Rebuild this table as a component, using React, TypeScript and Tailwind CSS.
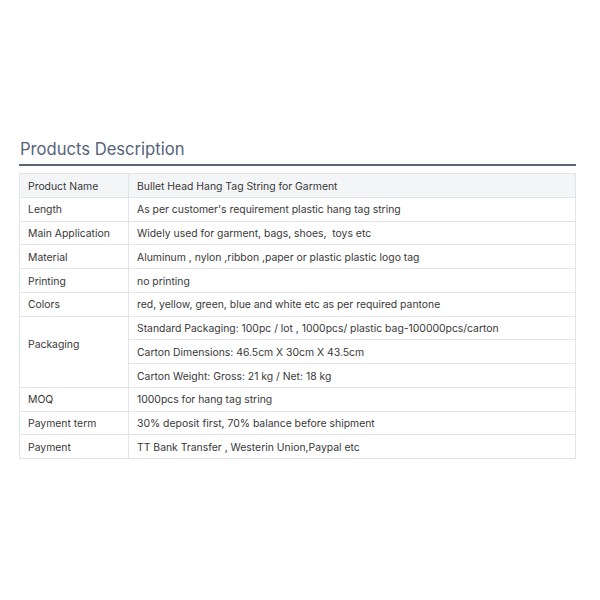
const rows: { label: string; values: string[] }[] = [
  { label: "Product Name", values: ["Bullet Head Hang Tag String for Garment"] },
  { label: "Length", values: ["As per customer's requirement plastic hang tag string"] },
  { label: "Main Application", values: ["Widely used for garment, bags, shoes,  toys etc"] },
  { label: "Material", values: ["Aluminum , nylon ,ribbon ,paper or plastic plastic logo tag"] },
  { label: "Printing", values: ["no printing"] },
  { label: "Colors", values: ["red, yellow, green, blue and white etc as per required pantone"] },
  {
    label: "Packaging",
    values: [
      "Standard Packaging: 100pc / lot , 1000pcs/ plastic bag-100000pcs/carton",
      "Carton Dimensions: 46.5cm X 30cm X 43.5cm",
      "Carton Weight: Gross: 21 kg / Net: 18 kg",
    ],
  },
  { label: "MOQ", values: ["1000pcs for hang tag string"] },
  { label: "Payment term", values: ["30% deposit first, 70% balance before shipment"] },
  { label: "Payment", values: ["TT Bank Transfer , Westerin Union,Paypal etc"] },
];

export default function App() {
  return (
    <div className="w-[600px] h-[600px] bg-white font-['Inter','Noto_Sans',sans-serif]">
      <div className="ml-[19px] w-[557px] pt-[138px]">
        {/* Heading */}
        <div className="border-b-2 border-[#5b6677] pb-[4px] pl-[1px]">
          <h2 className="text-[16.6px] leading-[22px] text-[#56637a]">Products Description</h2>
        </div>

        {/* Spec table */}
        <table className="mt-[7px] w-full border-collapse text-[10.4px] text-[#383838]">
          <tbody>
            {rows.map((row, i) =>
              row.values.map((v, j) => (
                <tr key={`${i}-${j}`} className={i === 0 ? "bg-[#f4f5f6]" : ""}>
                  {j === 0 && (
                    <td
                      rowSpan={row.values.length}
                      className={`w-[109px] h-[23.75px] border border-[#e1e4e8] pl-[8px] pt-[2px] align-middle ${
                        row.values.length > 1 ? "pb-[16px]" : ""
                      }`}
                    >
                      {row.label}
                    </td>
                  )}
                  <td className="h-[23.75px] border border-[#e1e4e8] pl-[8px] pt-[2px] align-middle whitespace-pre">{v}</td>
                </tr>
              ))
            )}
          </tbody>
        </table>
      </div>
    </div>
  );
}
